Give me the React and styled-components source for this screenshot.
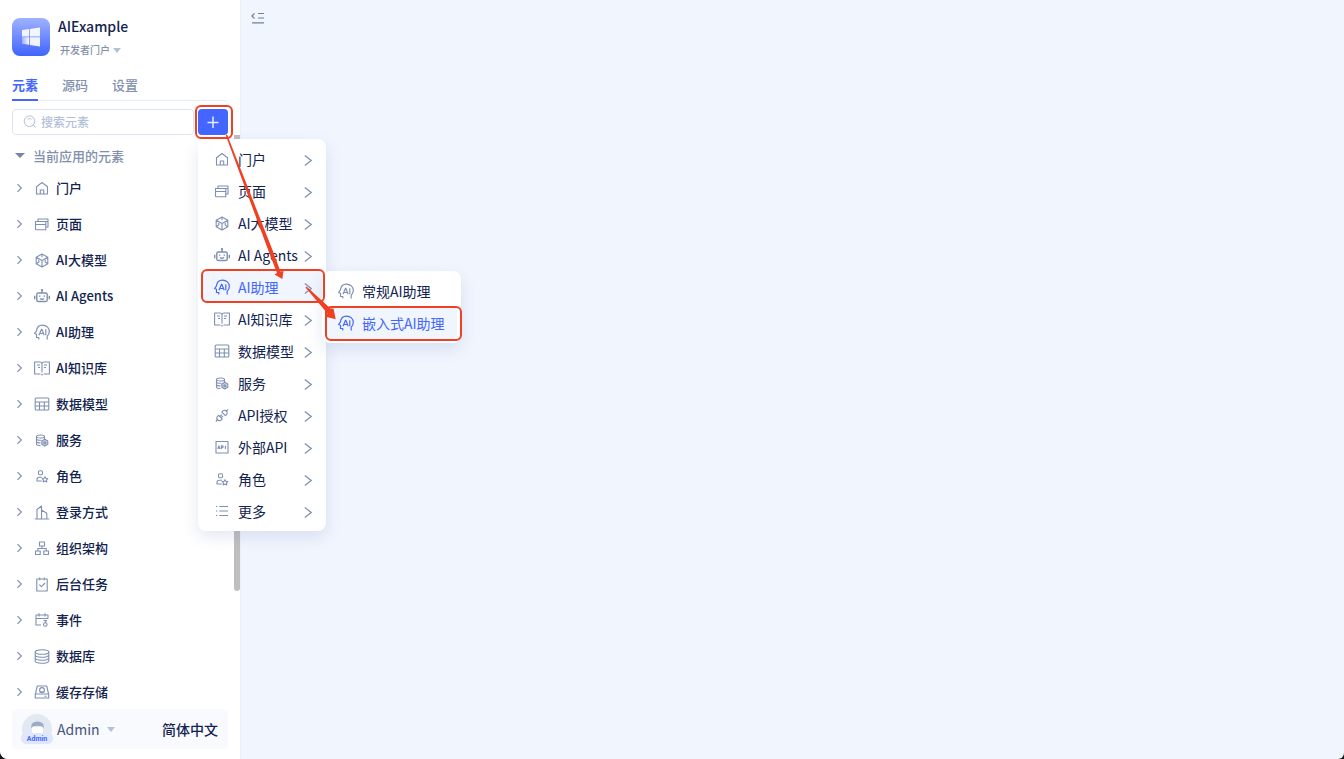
import React from "react";
import styled, { createGlobalStyle, css } from "styled-components";

const color = {
  text: "#13234f",
  muted: "#8190ad",
  icon: "#7f90b2",
  faint: "#b4bfd8",
  primary: "#4266ff",
  line: "#e0e4f0",
  canvas: "#f1f5fe",
  mark: "#ee4023",
};

const GlobalStyle = createGlobalStyle`
  * { box-sizing: border-box; }
  body {
    margin: 0;
    background: #15171c;
    color: ${color.text};
    font-family: "Noto Sans CJK SC", "Noto Sans", sans-serif;
    font-size: 13px;
  }
  button, input {
    font: inherit;
    color: inherit;
    border: 0;
    padding: 0;
    background: none;
  }
  button { cursor: pointer; text-align: left; }
`;

const Shell = styled.div`
  position: relative;
  display: flex;
  height: 100vh;
  min-height: 480px;
  overflow: hidden;
  border-radius: 0 0 6px 8px;
  background: ${color.canvas};
`;

const Sidebar = styled.aside`
  display: flex;
  flex-direction: column;
  flex: 0 0 241px;
  padding: 18px 0 10px;
  background: #fff;
  border-right: 1px solid #edf0f7;
`;

const Header = styled.header`
  display: flex;
  gap: 8px;
  height: 56px;
  padding: 0 12px;
`;

const Logo = styled.div`
  display: grid;
  place-items: center;
  width: 38px;
  height: 38px;
  border-radius: 8px;
  background: linear-gradient(#9fb2ff, #3f64ff);
`;

const AppTitle = styled.h1`
  margin: 0;
  font-size: 14px;
  line-height: 16px;
  font-weight: 500;
`;

const PortalButton = styled.button`
  display: flex;
  align-items: center;
  gap: 3px;
  margin: 9px 0 0 2px;
  font-size: 10px;
  line-height: 14px;
  font-weight: 500;
  color: ${color.muted};
`;

const Caret = styled.span`
  border: 4px solid transparent;
  border-top: 5px solid ${(p) => p.$color || color.faint};
  border-bottom: 0;
  ${(p) => p.$wide && css`
    border-left-width: 5px;
    border-right-width: 5px;
  `}
`;

const Tabs = styled.nav`
  display: flex;
  gap: 24px;
  margin: 0 12px;
  height: 27px;
  border-bottom: 1px solid #e9edf8;
`;

const Tab = styled.button`
  height: 27px;
  padding-bottom: 4px;
  line-height: 20px;
  font-weight: ${(p) => (p.$active ? 700 : 500)};
  color: ${(p) => (p.$active ? color.primary : color.muted)};
  border-bottom: 2px solid ${(p) => (p.$active ? color.primary : "transparent")};
`;

const Toolbar = styled.div`
  display: flex;
  gap: 4px;
  margin: 8px 12px 0;
`;

const SearchBox = styled.label`
  display: flex;
  flex: 1;
  align-items: center;
  gap: 4px;
  min-width: 0;
  height: 26px;
  padding: 0 10px;
  border: 1px solid ${color.line};
  border-radius: 4px;
`;

const SearchInput = styled.input`
  flex: 1;
  min-width: 0;
  font-size: 12px;
  font-weight: 500;
  line-height: 20px;
  outline: 0;
  &::placeholder { color: ${color.faint}; opacity: 1; }
`;

const Anchor = styled.div`
  position: relative;
  display: flex;
`;

const AddButton = styled.button`
  display: grid;
  place-items: center;
  width: 30px;
  height: 26px;
  border-radius: 4px;
  background: ${color.primary};
`;

const Highlight = styled.span`
  position: absolute;
  z-index: 3;
  inset: ${(p) => p.$inset};
  border: 2px solid ${color.mark};
  border-radius: 6px;
  pointer-events: none;
`;

const TreeArea = styled.div`
  position: relative;
  flex: 1;
  min-height: 0;
`;

const TreeScroll = styled.div`
  height: 100%;
  padding-top: 6px;
  overflow: hidden auto;
  scrollbar-width: none;
`;

const ScrollThumb = styled.div`
  position: absolute;
  top: 0;
  right: 0;
  width: 6px;
  height: 79.4%;
  border-radius: 0 0 3px 3px;
  background: #bfbfbf;
`;

const GroupButton = styled.button`
  display: flex;
  align-items: center;
  gap: 8px;
  height: 29px;
  padding-left: 15px;
  line-height: 18px;
  color: ${color.muted};
  font-weight: 500;
`;

const TreeList = styled.ul`
  margin: 0;
  padding: 0;
  list-style: none;
`;

const TreeRow = styled.button`
  display: flex;
  align-items: center;
  width: 100%;
  height: 36px;
  padding-left: 14px;
  line-height: 18px;
  font-weight: 500;
`;

const TreeIcon = styled.span`
  display: flex;
  margin: 0 6px 0 10px;
  color: ${color.icon};
`;

const Menu = styled.ul`
  position: absolute;
  z-index: 2;
  top: ${(p) => (p.$sub ? "0" : "30px")};
  left: ${(p) => (p.$sub ? "120px" : "0")};
  width: ${(p) => (p.$sub ? "139px" : "128px")};
  margin: 0;
  padding: 4px;
  list-style: none;
  border-radius: 8px;
  background: #fff;
  box-shadow: 0 6px 16px rgba(60, 90, 150, 0.14);
`;

const MenuItem = styled.li`
  position: ${(p) => (p.$framed ? "relative" : "static")};
`;

const MenuButton = styled.button`
  display: flex;
  align-items: center;
  width: 100%;
  height: 32px;
  padding: 0 10px 0 12px;
  border-radius: 4px;
  font-size: 14px;
  white-space: nowrap;
  color: ${(p) => (p.$active ? color.primary : color.text)};
  background: ${(p) => (p.$active ? color.canvas : "transparent")};
`;

const MenuIcon = styled.span`
  display: flex;
  margin-right: 8px;
  color: ${(p) => (p.$active ? color.primary : color.icon)};
`;

const MenuArrow = styled.span`
  display: flex;
  margin-left: auto;
  color: ${color.icon};
`;

const Footer = styled.footer`
  display: flex;
  align-items: center;
  justify-content: space-between;
  height: 40px;
  margin: 0 12px;
  padding: 0 10px 0 9px;
  border-radius: 4px;
  background: #f9fafd;
  font-size: 14px;
`;

const UserButton = styled.button`
  display: flex;
  align-items: center;
  gap: 4px;
  color: #45557b;
`;

const Avatar = styled.span`
  position: relative;
  display: flex;
  justify-content: center;
  width: 32px;
  height: 30px;
`;

const AvatarBadge = styled.span`
  position: absolute;
  bottom: 0;
  left: 0;
  width: 32px;
  height: 11px;
  border-radius: 5px;
  background: #dfe7fd;
  color: ${color.primary};
  font: 700 7px/12px Roboto, sans-serif;
  text-align: center;
`;

const UserCaret = styled(Caret)`
  margin-left: 3px;
`;

const LanguageButton = styled.button`
  color: ${color.text};
  font-weight: 500;
`;

const Content = styled.main`
  flex: 1;
  padding: 10px;
`;

const CollapseButton = styled.button`
  display: flex;
`;

const Pointers = styled.svg`
  position: absolute;
  z-index: 3;
  top: 0;
  left: 0;
  width: 480px;
  height: 360px;
  pointer-events: none;
`;

const glyphs = {
  portal: (
    <path d="M2.500 6.200 8 2l5.500 4.200V13.500h-11ZM6.300 13.500V9.500h3.400v4" />
  ),
  page: (
    <path d="M1.500 5h10.300v8.200H2.300a.8.8 0 0 1-.8-.8ZM1.500 8h10.300M4 5V2.500h10v8h-2.200M11.800 5H14" />
  ),
  model: (
    <path d="m8 1.500 5.800 3.300v6.400L8 14.500l-5.800-3.300V4.800ZM8 1.500v3.300M2.200 4.800 8 8l5.800-3.200M8 8v6.500M2.200 11.200 5 9.600M13.800 11.200 11 9.600M4.600 7.200l.4 2.400M11.400 7.200 11 9.600" />
  ),
  agents: (
    <g strokeWidth="1.400">
      <rect x="2.800" y="4.500" width="10.400" height="8.500" rx="1.600" />
      <path d="M8 2V4.500M.7 7.200v3.600M15.300 7.200v3.600M6 10c1.200 1 2.800 1 4 0M5.700 7v1.300M10.300 7v1.300" />
      <circle cx="8" cy="1.600" r=".5" fill="currentColor" />
    </g>
  ),
  assistant: (
    <path
      strokeWidth="1.200"
      d="M4.800 15v-2H2.500V9.800L.6 9l1.900-2.700C2.900 2.800 5.200.6 8.500.6c3.900 0 6.800 2.600 6.800 6.300 0 2-.8 3.300-1.900 4.500-.5.600-.3 2.200 0 3.600M5 10.800l2.500-6h.3l2.400 6M5.900 9h3.500M11.800 4.800v6"
    />
  ),
  knowledge: (
    <path d="M6.500 13.500H.6v-12H6q2 0 2 2v8.500M9.500 13.500h5.900v-12H10q-2 0-2 2M7 14.200h2M3 4.500h3M4 7h2M10 4.500h3M10 7h2" />
  ),
  data: (
    <g>
      <rect x="1.200" y="1.500" width="13.600" height="12" rx="1" />
      <path d="M1.200 5.500h13.600M1.200 9.500h13.600M5.500 5.500v8M10.300 5.500v8" />
    </g>
  ),
  service: (
    <g>
      <ellipse cx="6.500" cy="4" rx="4" ry="1.500" />
      <path d="M2.500 4v7.500c0 .9 1.800 1.500 4 1.500M10.500 4v3M2.500 6.500c0 1 2.500 1.500 4.800 1.200M2.500 9c0 1 2 1.500 4 1.300" />
      <path d="m10.800 6.800 3 1.700v3.300l-3 1.700-3-1.700V8.500Z" fill="currentColor" fillOpacity=".4" />
      <circle cx="10.800" cy="10.200" r="1" />
    </g>
  ),
  role: (
    <g>
      <rect x="4.500" y="2.200" width="4" height="4" rx="1.200" />
      <path d="M7.800 12.500H3V11q0-2.300 2.200-2.300H8M11 8.200l.9 1.600 1.900.3-1.300 1.400.3 1.900-1.800-.8-1.800.8.3-1.900-1.300-1.400 1.900-.3Z" />
    </g>
  ),
  login: (
    <path d="M.8 14.500h14.400M3 14.500V5l4.500-3.500v13M7.500 5.500l5.300 3.200v5.800" />
  ),
  org: (
    <path d="M5.500 1.500h5v4h-5ZM8 5.500v2.500M3.800 10.500V8h8.400v2.500M1.500 10.500h4.700v3.500H1.500ZM9.800 10.500h4.700v3.500H9.800Z" />
  ),
  task: (
    <path d="M2.800 2.500h10.400v12H2.800ZM5.700 1v2.800M10.300 1v2.800M5.300 8.200l2.200 2 3.500-3.700" />
  ),
  event: (
    <g>
      <path d="M7 12.500H2v-10h12v3.500M2 6h12M5 .8v3.200M11 .8v3.200M9.500 8h3l-1.600 2.400" />
      <circle cx="11.300" cy="12" r="1.800" />
    </g>
  ),
  database: (
    <g>
      <ellipse cx="8" cy="3.500" rx="6.800" ry="2.300" />
      <path d="M1.200 3.500v9c0 3 13.600 3 13.600 0v-9M1.200 6.500c0 3 13.600 3 13.600 0M1.200 9.500c0 3 13.600 3 13.600 0" />
    </g>
  ),
  cache: (
    <g>
      <path d="M3.300 1.500h9.400l2 8.500v3.500H1.300V10ZM1.300 9.500h13.400M10.500 11.700h2M5.500 7.500h5" />
      <circle cx="8" cy="5.500" r="2.400" />
    </g>
  ),
  auth: (
    <path d="m1.800 14 2.400-2.400M11.800 4.200l2.400-2.400M4.600 7.800l3.600 3.600-1.400 1.400a2.600 2.600 0 0 1-3.600-3.600ZM7.800 4.600l3.600 3.600 1.400-1.400a2.600 2.600 0 0 0-3.600-3.600ZM6 9l1.800-1.800M7.200 10.200 9 8.400" />
  ),
  api: (
    <path d="M2 2h12v11.500H2ZM3.800 9.400l1.100-3 1.100 3M4.200 8.600h1.400M7.400 9.400v-3h.9a.8.8 0 0 1 0 1.700h-.9M11.400 6.300v3.200" />
  ),
  more: <path d="M5.300 3H14M5.300 7.500H14M5.300 12H14M2 3h1.300M2 7.500h1.300M2 12h1.300" />,
};

const Glyph = ({ name }) => (
  <svg
    width="16"
    height="16"
    viewBox="0 -0.500 16 16"
    fill="none"
    stroke="currentColor"
    strokeWidth="1.100"
    strokeLinejoin="round"
    aria-hidden="true"
  >
    {glyphs[name]}
  </svg>
);

const TreeChevron = () => (
  <svg width="10" height="10" viewBox="0 0 10 10" fill="none" stroke={color.icon} strokeWidth="1.200" aria-hidden="true">
    <path d="m3.500 1.200 3.800 3.800-3.800 3.800" />
  </svg>
);

const MenuChevron = () => (
  <svg width="8" height="14" viewBox="0 0 8 14" fill="none" stroke="currentColor" strokeWidth="1.200" aria-hidden="true">
    <path d="m.8 3.500 6.400 5-6.400 5" />
  </svg>
);

const tree = [
  ["portal", "门户"],
  ["page", "页面"],
  ["model", "AI大模型"],
  ["agents", "AI Agents"],
  ["assistant", "AI助理"],
  ["knowledge", "AI知识库"],
  ["data", "数据模型"],
  ["service", "服务"],
  ["role", "角色"],
  ["login", "登录方式"],
  ["org", "组织架构"],
  ["task", "后台任务"],
  ["event", "事件"],
  ["database", "数据库"],
  ["cache", "缓存存储"],
];

const menu = [
  ["portal", "门户"],
  ["page", "页面"],
  ["model", "AI大模型"],
  ["agents", "AI Agents"],
  ["assistant", "AI助理"],
  ["knowledge", "AI知识库"],
  ["data", "数据模型"],
  ["service", "服务"],
  ["auth", "API授权"],
  ["api", "外部API"],
  ["role", "角色"],
  ["more", "更多"],
];

const AssistantMenu = () => (
  <Menu $sub>
    <MenuItem>
      <MenuButton>
        <MenuIcon><Glyph name="assistant" /></MenuIcon>
        常规AI助理
      </MenuButton>
    </MenuItem>
    <MenuItem $framed>
      <MenuButton $active>
        <MenuIcon $active><Glyph name="assistant" /></MenuIcon>
        嵌入式AI助理
      </MenuButton>
      <Highlight $inset="-1px -5px -2px -1px" />
    </MenuItem>
  </Menu>
);

const AddMenu = () => (
  <Menu>
    {menu.map(([icon, label]) => {
      const active = icon === "assistant";
      return (
        <MenuItem key={icon} $framed={active}>
          <MenuButton $active={active}>
            <MenuIcon $active={active}><Glyph name={icon} /></MenuIcon>
            {label}
            <MenuArrow><MenuChevron /></MenuArrow>
          </MenuButton>
          {active && (
            <>
              <AssistantMenu />
              <Highlight $inset="-2px -3px 0 -1px" />
            </>
          )}
        </MenuItem>
      );
    })}
  </Menu>
);

export default function App() {
  return (
    <>
      <GlobalStyle />
      <Shell>
        <Sidebar>
          <Header>
            <Logo>
              <svg width="20" height="20" viewBox="0 0 20 20" aria-hidden="true">
                <defs>
                  <linearGradient id="pane" x1="0" x2="1">
                    <stop offset="0" stopColor="#fff" stopOpacity=".35" />
                    <stop offset="1" stopColor="#fff" />
                  </linearGradient>
                </defs>
                <path fill="#fff" fillOpacity=".9" d="m1 3 7.200-1v7.500H1ZM9 1.900 19 .5v9H9ZM9 10.300h10v9.200L9 18Z" />
                <path fill="url(#pane)" d="M1 10.300h7.200v7.500L1 16.800Z" />
              </svg>
            </Logo>
            <div>
              <AppTitle>AIExample</AppTitle>
              <PortalButton>开发者门户<Caret /></PortalButton>
            </div>
          </Header>
          <Tabs>
            <Tab $active>元素</Tab>
            <Tab>源码</Tab>
            <Tab>设置</Tab>
          </Tabs>
          <Toolbar>
            <SearchBox>
              <svg width="14" height="14" viewBox="0 0 14 14" fill="none" stroke={color.faint} aria-hidden="true">
                <circle cx="6.500" cy="6.200" r="5.300" />
                <path d="m10.300 10 2.200 2.500M4.500 4.200q2-1.300 4 0" />
              </svg>
              <SearchInput type="text" placeholder="搜索元素" aria-label="搜索元素" />
            </SearchBox>
            <Anchor>
              <AddButton aria-label="新增">
                <svg width="12" height="12" viewBox="0 0 12 12" stroke="#e6ebff" strokeWidth="1.500" aria-hidden="true">
                  <path d="M6 .5v11.500M.5 6.500h11" />
                </svg>
              </AddButton>
              <Highlight $inset="-4px -5px -4px -3px" />
              <AddMenu />
            </Anchor>
          </Toolbar>
          <TreeArea>
            <TreeScroll>
              <GroupButton><Caret $wide $color="#7485a8" />当前应用的元素</GroupButton>
              <TreeList>
                {tree.map(([icon, label]) => (
                  <li key={icon}>
                    <TreeRow>
                      <TreeChevron />
                      <TreeIcon><Glyph name={icon} /></TreeIcon>
                      {label}
                    </TreeRow>
                  </li>
                ))}
              </TreeList>
            </TreeScroll>
            <ScrollThumb />
          </TreeArea>
          <Footer>
            <UserButton>
              <Avatar>
                <svg width="30" height="30" viewBox="0 0 30 30" aria-hidden="true">
                  <circle cx="15" cy="15" r="15" fill="#e3e9f2" />
                  <path d="M10 13h11v5q-1 3-5.500 3T10 18Z" fill="#fff" />
                  <path d="M9.500 14.500q-1-4.500 2-6 4-2 8 0 3 1.500 2 6l-1.500-2.300q-4.500-1-9 0Z" fill="#9eabc5" />
                </svg>
                <AvatarBadge>Admin</AvatarBadge>
              </Avatar>
              Admin
              <UserCaret />
            </UserButton>
            <LanguageButton>简体中文</LanguageButton>
          </Footer>
        </Sidebar>
        <Content>
          <CollapseButton aria-label="收起侧栏">
            <svg width="14" height="16" viewBox="0 0 14 16" fill="none" stroke="#71809f" strokeWidth="1.200" aria-hidden="true">
              <path d="M3.500 3.500.9 6l2.600 2.500M7 3.500h6M7 8h6M1 12.800h12" />
            </svg>
          </CollapseButton>
        </Content>
        <Pointers viewBox="0 0 480 360" fill={color.mark} aria-hidden="true">
          <path d="M225.700 135.200 227.200 134.700 272.500 250 280.500 271.500 283.500 271 282.300 279 274.500 274.500 277 273 268.500 251Z" />
          <path d="M305.500 287.500 306.500 286.500 330.500 308.500 333.500 308.500 335.700 319.200 324.800 316.500 327.500 313.500Z" />
        </Pointers>
      </Shell>
    </>
  );
}
